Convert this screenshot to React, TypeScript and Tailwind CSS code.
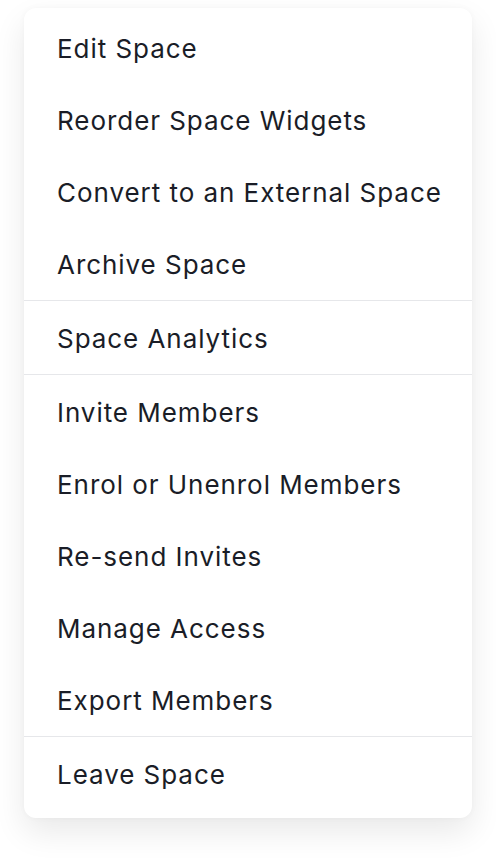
import React from "react";

const groups: string[][] = [
  ["Edit Space", "Reorder Space Widgets", "Convert to an External Space", "Archive Space"],
  ["Space Analytics"],
  ["Invite Members", "Enrol or Unenrol Members", "Re-send Invites", "Manage Access", "Export Members"],
  ["Leave Space"],
];

export default function App() {
  return (
    <div className="w-[496px] h-[862px] bg-white pt-2 px-6" style={{ fontFamily: "Inter, 'Noto Sans', sans-serif" }}>
      <div className="w-[448px] bg-white rounded-xl shadow-[0_14px_32px_rgba(0,0,0,0.09),0_0_6px_rgba(0,0,0,0.03)]">
        {groups.map((g, gi) => (
          <div
            key={gi}
            className={
              (gi > 0 ? "border-t border-[#e6e7ea] pt-[1px] " : "pt-1 ") + (gi === groups.length - 1 ? "pb-2" : "")
            }
          >
            {g.map((label) => (
              <div key={label} className="h-[72px] flex items-center pl-[33px] text-[26px] text-[#1a1d27] tracking-[0.95px]">
                {label}
              </div>
            ))}
          </div>
        ))}
      </div>
    </div>
  );
}
